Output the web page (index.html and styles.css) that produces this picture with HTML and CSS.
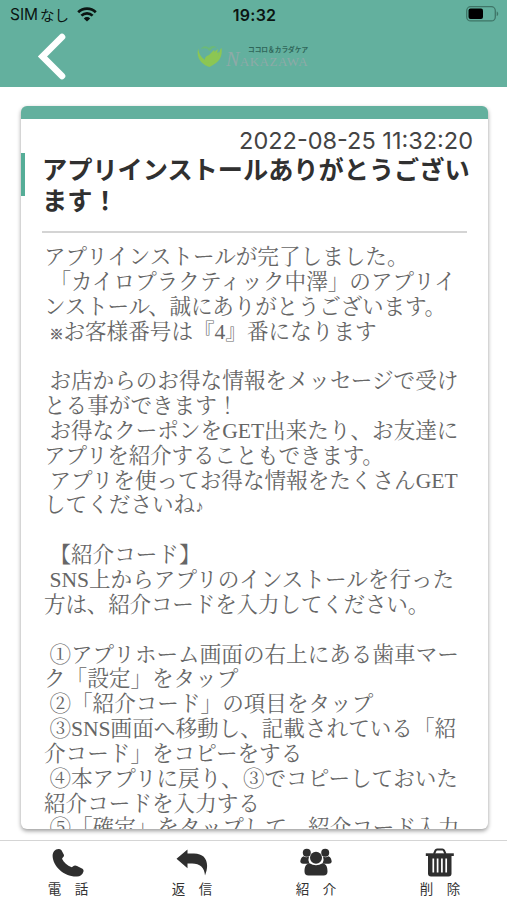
FILE: index.html
```html
<!DOCTYPE html>
<html lang="ja">
<head>
  <meta charset="UTF-8" />
  <meta name="viewport" content="width=device-width, initial-scale=1.0" />
  <title>メッセージ</title>
  <link rel="stylesheet" href="styles.css">
</head>
<body>
  <header>
    <div class="status">
      <div class="carrier">
        <span class="sim">SIM</span><span class="none">なし</span>
        <svg class="wifi" viewBox="0 0 20 15" width="20" height="15">
          <path d="M1.2 5.2a12.6 12.6 0 0 1 17.6 0M4.4 8.6a8 8 0 0 1 11.2 0" fill="none" stroke="#0b1512" stroke-width="2.7"/>
          <path d="M10 14.6l-3.2-3.2a4.6 4.6 0 0 1 6.4 0z" fill="#0b1512"/>
        </svg>
      </div>
      <div class="time">19:32</div>
      <svg class="battery" viewBox="0 0 33 16" width="33" height="16">
        <rect x="0.7" y="0.7" width="28.6" height="14.2" rx="4" fill="none" stroke="#3f7567" stroke-width="1.3"/>
        <rect x="2.5" y="2.5" width="14.5" height="10.6" rx="2" fill="#000"/>
        <path d="M30.7 5.5c2 .6 2 4 0 4.6z" fill="#3f7567"/>
      </svg>
    </div>
    <div class="nav">
      <svg class="back" viewBox="0 0 30 48" width="30" height="48">
        <path d="M25 5L5.500 24.500L25 44" fill="none" stroke="#fff" stroke-width="6.6" stroke-linecap="round"/>
      </svg>
      <div class="logo">
        <svg viewBox="0 0 28 26" width="28" height="26">
          <path d="M2.2 5.5C-.5 16 7 22 13.500 24C22 20 27 15 25.500 5C23 7 24 11 21 14C18 18 12 20 9 17C5 14 3 11 2.200 5.500z" fill="#8cc653"/>
          <path d="M9 19c-1-4 1-6 4-7l5-5c1 0 0 2 0 2l4-3-1 4 2-1c0 6-5 10-9 11z" fill="#8cc653"/>
          <path d="M5 6c2-4 6-3 8-1 2-2 5-3 8 0-3-1-5 0-6 2-1 1-3 1-3-1-2-1-5-1-7 0z" fill="#6cba78"/>
        </svg>
        <div class="brand">
          <span class="tagline">ココロ＆カラダケア</span>
          <span class="name"><b>N</b>AKAZAWA</span>
        </div>
      </div>
    </div>
  </header>

  <main>
    <article class="card">
      <div class="date">2022-08-25 11:32:20</div>
      <h1>アプリインストールありがとうござい<br>ます！</h1>
      <div class="message">アプリインストールが完了しました。
 「カイロプラクティック中澤」のアプリイ
<span class="tight">ンストール、誠にありがとうございます。</span>
 <span class="mark">※</span>お客様番号は『4』番になります

 お店からのお得な情報をメッセージで受け
とる事ができます！
 お得なクーポンをGET出来たり、お友達に
<span class="tight">アプリを紹介することもできます。</span>
 アプリを使ってお得な情報をたくさんGET
してくださいね<span class="note">♪</span>

 【紹介コード】
 SNS上からアプリのインストールを行った
<span class="tight">方は、紹介コードを入力してください。</span>

 ①アプリホーム画面の右上にある歯車マー
ク「設定」をタップ
 ②「紹介コード」の項目をタップ
 ③SNS画面へ移動し、記載されている「紹
介コード」をコピーをする
 ④本アプリに戻り、③でコピーしておいた
紹介コードを入力する
 ⑤「確定」をタップして、紹介コード入力</div>
    </article>
  </main>

  <footer>
    <a>
      <svg viewBox="0 0 32 30" width="32" height="30">
        <path d="M6.500 1Q8 .8 9.500 2.300L12 7Q12.300 8.500 11 9.300L10 10.800C12 14.500 15 17.500 19.700 19.200L22 17.800Q23.500 17.200 25 18L30.500 20.800Q32 21.800 31.500 23.500C30.500 27 28 28.500 25 28.500C12 29 1 18.500 .6 8C.6 4 3 1 6.500 1z"/>
      </svg>
      <span>電　話</span>
    </a>
    <a>
      <svg viewBox="0 0 32 30" width="32" height="30">
        <path d="M.5 10.800L11.500 1.500V5.500H18C30 5.500 34 15 29 27.500C28.500 19.500 24 15.500 16 15.500H11.500V20.300z"/>
      </svg>
      <span>返　信</span>
    </a>
    <a>
      <svg viewBox="0 0 32 30" width="32" height="30">
        <circle cx="6.800" cy="4.800" r="4"/>
        <circle cx="25.200" cy="4.800" r="4"/>
        <path d="M3.500 8.200C1 9 .3 12 .3 14Q.8 15.800 3 15.800H9.500Q7.500 12 9 8.500Q6 10.300 3.500 8.200z"/>
        <path d="M28.500 8.200C31 9 31.700 12 31.700 14Q31.200 15.800 29 15.800H22.500Q24.500 12 23 8.500Q26 10.300 28.500 8.200z"/>
        <circle cx="16" cy="9.800" r="6"/>
        <path d="M9.500 15.300Q16 19.300 22.500 15.300C26.500 16 27.500 19.500 27.500 23.500Q27.500 27.500 23.500 27.500H8.500Q4.500 27.500 4.500 23.500C4.500 19.500 5.500 16 9.500 15.300z"/>
      </svg>
      <span>紹　介</span>
    </a>
    <a>
      <svg viewBox="0 0 32 30" width="32" height="30">
        <path d="M10 6L11.500 2.500Q12 1.500 13 1.500H18.500Q19.500 1.500 20 2.500L21.500 6" fill="none" stroke="#2e2e2e" stroke-width="2"/>
        <rect x="1.800" y="5.300" width="28" height="2.700"/>
        <path d="M4 7V25.500Q4 28.500 7 28.500H24.500Q27.500 28.500 27.500 25.500V7z"/>
        <path d="M9.300 10.500V24.500M13.600 10.500V24.500M17.900 10.500V24.500M22.200 10.500V24.500" stroke="#fff" stroke-width="1.700"/>
      </svg>
      <span>削　除</span>
    </a>
  </footer>
</body>
</html>
```
FILE: styles.css
```css
* {
  box-sizing: border-box;
}
body {
  font-family: 'Inter', 'Noto Sans CJK JP', sans-serif;
  background: #fff;
  margin: 0;
  height: 900px;
  display: flex;
  flex-direction: column;
  overflow: hidden;
  color: #333;
}
header {
  background: #63b09e;
  height: 87px;
  flex-shrink: 0;
}
.status {
  height: 29px;
  padding: 0 8px 0 10px;
  display: grid;
  grid-template-columns: 1fr auto 1fr;
  align-items: center;
  color: #0b1512;
}
.carrier {
  display: flex;
  align-items: center;
  font-size: 15.5px;
  white-space: nowrap;
}
.sim {
  width: 30px;
}
.none {
  font-size: 14.5px;
  width: 37px;
}
.time {
  font-size: 16px;
  font-weight: 600;
  letter-spacing: 0.3px;
}
.battery {
  justify-self: end;
  margin-top: -2px;
}
.nav {
  display: flex;
  height: 56px;
  padding-left: 37px;
}
.back {
  margin-top: 3px;
}
.logo {
  display: flex;
  margin: 14px 0 0 129px;
}
.brand {
  display: flex;
  flex-direction: column;
  margin-left: 2px;
}
.tagline {
  font-size: 6.7px;
  font-weight: 700;
  line-height: 7px;
  margin: 4px 0 0 22px;
  color: #2f6659;
  white-space: nowrap;
}
.name {
  font-family: 'Liberation Serif', serif;
  font-size: 13px;
  line-height: 13px;
  letter-spacing: 0.5px;
  color: #8eaaa8;
  margin-top: -1px;
}
.name b {
  font-size: 20px;
  font-weight: 400;
  font-style: italic;
}
main {
  flex: 1;
  min-height: 0;
  padding: 19px 19px 11px 21px;
}
.card {
  height: 723px;
  border-top: 13px solid #63b09e;
  border-radius: 6px;
  padding: 0 15px 0 21px;
  overflow: hidden;
  box-shadow: 0 2px 4px rgba(0, 0, 0, 0.4);
  background: linear-gradient(#55ad97, #55ad97) 0 34px / 4px 43px no-repeat #fff;
}
.date {
  text-align: right;
  font-size: 23.5px;
  line-height: 30px;
  margin-top: 7px;
  color: #444;
}
h1 {
  font-family: 'Noto Sans CJK JP', sans-serif;
  font-size: 25.2px;
  line-height: 31px;
  font-weight: 700;
  color: #303030;
  margin: -3px 6px 0 0;
  height: 80px;
  border-bottom: 2px solid #d4d4d4;
  white-space: nowrap;
}
.message {
  font-family: 'Liberation Serif', 'Noto Serif CJK JP', serif;
  font-size: 21.6px;
  font-weight: 400;
  line-height: 24.84px;
  white-space: pre;
  padding: 12px 0 0 2px;
  color: #666;
}
.tight {
  letter-spacing: -0.2px;
}
.mark {
  font-size: 14px;
  line-height: 1;
  -webkit-text-stroke: 0.5px #666;
}
.note {
  font-size: 17px;
  line-height: 1;
}
footer {
  height: 60px;
  flex-shrink: 0;
  border-top: 1px solid #d5d5d5;
  display: flex;
  padding-left: 6px;
}
footer a {
  width: 124px;
  flex-shrink: 0;
  display: flex;
  flex-direction: column;
  align-items: center;
  font-size: 13.5px;
  color: #333;
}
footer svg {
  fill: #2e2e2e;
  margin-top: 7px;
}
footer span {
  line-height: 20px;
  margin-top: 1px;
}
```
